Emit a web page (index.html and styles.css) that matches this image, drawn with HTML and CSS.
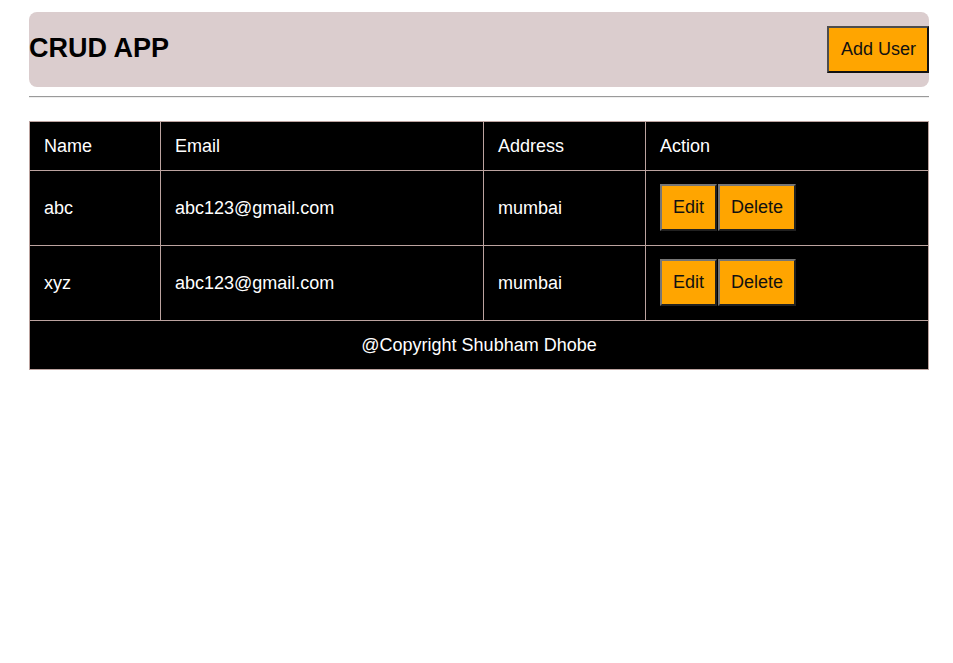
FILE: index.html
```html
<!DOCTYPE html>
<html lang="en">
<head>
<meta charset="utf-8">
<title>CRUD APP</title>
<link rel="stylesheet" href="styles.css">
</head>
<body>
<div class="app">
  <header class="topbar">
    <h1 class="title">CRUD APP</h1>
    <button class="btn btn-add">Add User</button>
  </header>
  <hr class="divider">
  <table class="users">
    <colgroup>
      <col class="c-name"><col class="c-email"><col class="c-addr"><col class="c-act">
    </colgroup>
    <thead>
      <tr><th>Name</th><th>Email</th><th>Address</th><th>Action</th></tr>
    </thead>
    <tbody>
      <tr>
        <td>abc</td><td>abc123@gmail.com</td><td>mumbai</td>
        <td><div class="actions"><button class="btn">Edit</button><button class="btn">Delete</button></div></td>
      </tr>
      <tr>
        <td>xyz</td><td>abc123@gmail.com</td><td>mumbai</td>
        <td><div class="actions"><button class="btn">Edit</button><button class="btn">Delete</button></div></td>
      </tr>
    </tbody>
    <tfoot>
      <tr><td colspan="4" class="footer">@Copyright Shubham Dhobe</td></tr>
    </tfoot>
  </table>
</div>
</body>
</html>
```
FILE: styles.css
```css
html, body {
  margin: 0;
  padding: 0;
  background: #ffffff;
}
body {
  font-family: "Liberation Sans", Arial, sans-serif;
  font-size: 18px;
}
.app {
  width: 900px;
  padding: 12px 0 0 29px;
}
.topbar {
  height: 75px;
  box-sizing: border-box;
  background: rgb(219, 205, 206);
  border-radius: 8px;
  display: flex;
  align-items: center;
  justify-content: space-between;
}
.title {
  margin: 0 0 2px 0;
  font-size: 27px;
  font-weight: bold;
  color: #000;
}
.btn {
  font-family: "Liberation Sans", Arial, sans-serif;
  font-size: 18px;
  line-height: 19px;
  color: #111;
  background: #ffa500;
  border: 2px outset #767676;
  padding: 12px 11px;
  margin: 0;
  cursor: pointer;
}
.btn-add {
  padding: 12px 11px 12px 12px;
  border-color: #4d4d4d #111 #111 #4d4d4d;
  border-style: solid;
}
.divider {
  margin: 9px 0 23px 0;
  border: 0;
  border-top: 1px solid #9a9a9a;
  border-bottom: 1px solid #eeeeee;
  height: 0;
}
.users {
  width: 899px;
  border-collapse: collapse;
  table-layout: fixed;
  background: #000;
  color: #fff;
}
.c-name { width: 131px; }
.c-email { width: 323px; }
.c-addr { width: 162px; }
.c-act { width: 283px; }
.users th,
.users td {
  border: 1px solid #bca39f;
  padding: 14px 14px;
  line-height: 20px;
  text-align: left;
  font-weight: normal;
}
.users tbody td {
  padding: 13px 14px 14px 14px;
}
.users td.footer {
  text-align: center;
  padding: 14px 14px;
}
.actions {
  display: flex;
  gap: 1px;
}
```
